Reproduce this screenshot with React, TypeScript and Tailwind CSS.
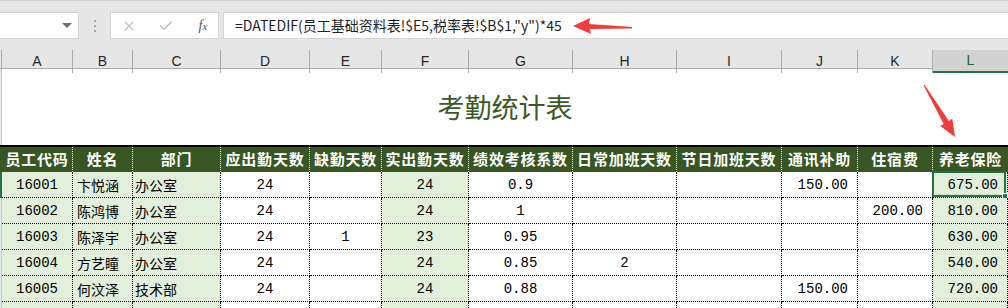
import React from 'react';
import { X, Check } from 'lucide-react';

const GRID =
  'grid grid-cols-[71px_60px_88px_89px_72px_87px_104px_104px_105px_76px_75px_75px]';

const letters = ['A', 'B', 'C', 'D', 'E', 'F', 'G', 'H', 'I', 'J', 'K', 'L'];

const headers = [
  '员工代码',
  '姓名',
  '部门',
  '应出勤天数',
  '缺勤天数',
  '实出勤天数',
  '绩效考核系数',
  '日常加班天数',
  '节日加班天数',
  '通讯补助',
  '住宿费',
  '养老保险',
];

const rows: string[][] = [
  ['16001', '卞悦涵', '办公室', '24', '', '24', '0.9', '', '', '150.00', '', '675.00'],
  ['16002', '陈鸿博', '办公室', '24', '', '24', '1', '', '', '', '200.00', '810.00'],
  ['16003', '陈泽宇', '办公室', '24', '1', '23', '0.95', '', '', '', '', '630.00'],
  ['16004', '方艺瞳', '办公室', '24', '', '24', '0.85', '2', '', '', '', '540.00'],
  ['16005', '何汶泽', '技术部', '24', '', '24', '0.88', '', '', '150.00', '', '720.00'],
  ['', '', '', '', '', '', '', '', '', '', '', ''],
];

const greenCols = [0, 1, 2, 5, 11];

const cjk = "font-['Noto_Sans_CJK_SC','Noto_Sans',sans-serif]";
const mono = "font-['Liberation_Mono','DejaVu_Sans_Mono',monospace]";

function cellClass(i: number) {
  const fill = greenCols.includes(i) ? 'bg-[#e2efda]' : 'bg-white';
  if (i === 1 || i === 2) {
    return `${fill} ${cjk} text-[14px] justify-start ${i === 1 ? 'pl-[4px]' : 'pl-[2px]'}`;
  }
  if (i >= 9) {
    return `${fill} ${mono} text-[14px] justify-end pr-[9px]`;
  }
  return `${fill} ${mono} text-[14px] justify-center`;
}

function Toolbar() {
  return (
    <div className="h-[50px] bg-[#e6e6e6] border-t border-[#d4d4d4] pt-[11px] flex">
      <div className="w-[79px] h-[27px] bg-white border border-l-0 border-[#d4d4d4] flex items-center justify-end pr-[6px]">
        <div className="w-0 h-0 border-l-[5px] border-r-[5px] border-t-[5px] border-l-transparent border-r-transparent border-t-[#6f6f6f]" />
      </div>
      <div className="w-[31px] h-[27px] flex flex-col items-center justify-center gap-[3px]">
        <span className="w-[2px] h-[2px] bg-[#a9a9a9]" />
        <span className="w-[2px] h-[2px] bg-[#a9a9a9]" />
        <span className="w-[2px] h-[2px] bg-[#a9a9a9]" />
      </div>
      <div className="w-[109px] h-[27px] bg-white border border-[#d4d4d4] flex items-center">
        <X className="ml-[10px] w-[16px] h-[16px] text-[#bdbdbd]" strokeWidth={1.6} />
        <Check className="ml-[21px] w-[16px] h-[16px] text-[#bdbdbd]" strokeWidth={2.2} />
        <span className="ml-[21px] w-[16px] text-center font-['Liberation_Serif',serif] italic text-[14px] text-[#555] leading-none">
          f<span className="text-[11px]">x</span>
        </span>
      </div>
      <div className="ml-[4px] flex-1 h-[27px] bg-white border border-r-0 border-[#d4d4d4] flex items-center pl-[11px]">
        <span className={`${cjk} text-[14px] text-[#1f1f1f] whitespace-nowrap`}>
          =DATEDIF(员工基础资料表!$E5,税率表!$B$1,"y")*45
        </span>
      </div>
    </div>
  );
}

function ColumnLetters() {
  return (
    <div className="flex h-[19px] bg-[#e6e6e6] border-b border-[#ababab]">
      <div className="w-[2px] border-r border-[#ababab]" />
      <div className={GRID}>
        {letters.map((l) =>
          l === 'L' ? (
            <div
              key={l}
              className="bg-[#d2d2d2] border-b-2 border-[#217346] flex items-center justify-center font-['Liberation_Sans',sans-serif] text-[14px] text-[#1d5f3a]"
            >
              {l}
            </div>
          ) : (
            <div
              key={l}
              className="border-r border-[#ababab] flex items-center justify-center font-['Liberation_Sans',sans-serif] text-[14px] text-[#262626]"
            >
              {l}
            </div>
          )
        )}
      </div>
    </div>
  );
}

export default function App() {
  return (
    <div className="relative w-[1008px] h-[308px] overflow-hidden bg-white">
      <Toolbar />
      <ColumnLetters />

      {/* title row */}
      <div className="flex h-[78px] border-b-2 border-black">
        <div className="w-[2px] border-r border-[#c8c8c8] bg-[#e6e6e6]" />
        <div className={`flex-1 flex items-center justify-center ${cjk} text-[27px] text-[#3b5a26]`}>
          考勤统计表
        </div>
      </div>

      {/* table header */}
      <div className="flex h-[25px] bg-[#375623]">
        <div className="w-[2px]" />
        <div className={GRID}>
          {headers.map((h, i) => (
            <div
              key={h}
              className={`flex items-center justify-center ${cjk} font-bold text-[15px] tracking-[0.8px] text-white whitespace-nowrap ${
                i < 11 ? 'border-r border-dotted border-white' : ''
              }`}
            >
              {h}
            </div>
          ))}
        </div>
      </div>

      {/* data rows */}
      {rows.map((r, ri) => (
        <div key={ri} className="flex h-[26px]">
          <div className={`w-[2px] ${ri === 0 ? 'bg-[#217346]' : 'bg-[#e6e6e6] border-r border-[#c8c8c8]'}`} />
          <div className={GRID}>
            {r.map((v, i) => (
              <div
                key={i}
                className={`relative flex items-center pt-[2px] text-black whitespace-nowrap border-r border-b border-dotted border-black ${cellClass(i)}`}
              >
                {v}
                {ri === 0 && i === 11 && (
                  <div className="absolute -top-px -left-px right-[1px] bottom-0 border-2 border-[#217346]">
                    <div className="absolute -right-[4px] -bottom-[4px] w-[6px] h-[6px] bg-[#217346] border border-white" />
                  </div>
                )}
              </div>
            ))}
          </div>
        </div>
      ))}

      {/* red annotation arrows */}
      <svg className="absolute left-0 top-0 pointer-events-none" width="1008" height="308">
        <polygon
          points="573,26 590,18 589,24 632,27 632,28.5 590,29 591,34"
          fill="#f03c3c"
        />
        <polygon
          points="955,137 940.3,126 943.7,123.9 923.5,85.3 924.5,84.7 948.9,120.9 952.3,118.8"
          fill="#f03c3c"
        />
      </svg>
    </div>
  );
}
